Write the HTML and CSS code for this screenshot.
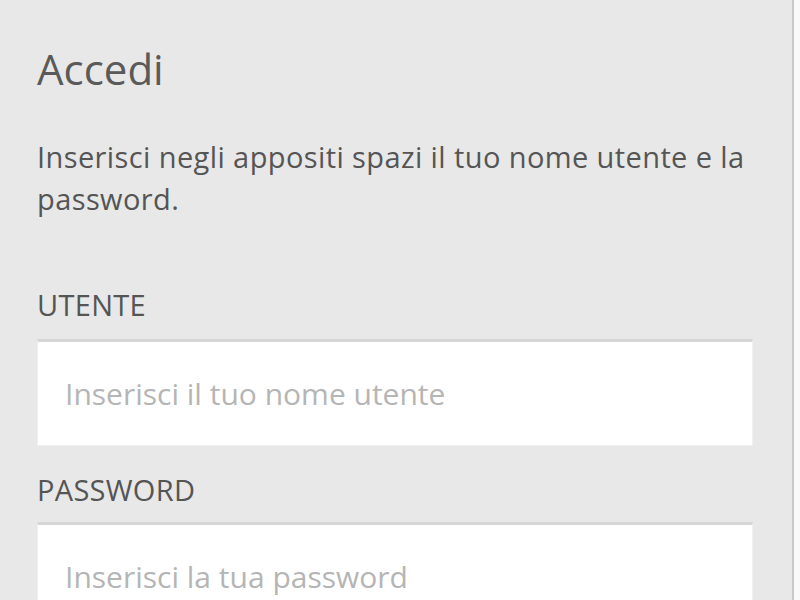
FILE: index.html
```html
<!doctype html>
<html>
  <head>
    <meta charset="UTF-8">
    <title>Accedi</title>
    <link rel="stylesheet" href="styles.css">
  </head>
  <body>
    <div class="topbar"></div>
    <div class="page">
      <form class="login">
        <h2>Accedi</h2>
        <p>Inserisci negli appositi spazi il tuo nome utente e la password.</p>
        <label for="user">UTENTE</label>
        <input type="text" id="user" placeholder="Inserisci il tuo nome utente">
        <label for="pass">PASSWORD</label>
        <input type="password" id="pass" placeholder="Inserisci la tua password">
      </form>
    </div>
  </body>
</html>
```

FILE: styles.css
```css
html, body{
  margin: 0;
  height: 100%;
}
body{
  background: #fafafa;
  font-family: "Open Sans", "Liberation Sans", sans-serif;
  overflow: hidden;
  display: flex;
  flex-direction: column;
}
.topbar{
  height: 6px;
  width: 794px;
  background: linear-gradient(#f6e9b8, #e8e8e8);
}
.page{
  width: 792px;
  flex: 1;
  background: #e8e8e8;
  border-right: 2px solid #c9c9c9;
}
.login{
  padding: 40px 40px 0 37px;
}
h2{
  margin: 0;
  font-size: 42px;
  font-weight: 400;
  color: #5a5a5a;
  line-height: 58px;
}
p{
  margin: 38px 0 0;
  font-size: 29px;
  letter-spacing: 0.4px;
  line-height: 42px;
  color: #555;
}
label{
  display: block;
  margin-top: 67px;
  font-size: 29px;
  letter-spacing: 0.3px;
  line-height: 36px;
  color: #555;
}
input{
  display: block;
  box-sizing: border-box;
  width: 716px;
  height: 107px;
  margin-top: 16px;
  padding: 0 27px;
  border: 1px solid #f0f0f0;
  border-top: 3px solid #d6d6d6;
  background: #fff;
  font-family: inherit;
  font-size: 30px;
  color: #555;
  outline: none;
}
input + label{
  margin-top: 26px;
}
#pass{
  margin-top: 14px;
}
input::placeholder{
  color: #b5b5b5;
}
```
